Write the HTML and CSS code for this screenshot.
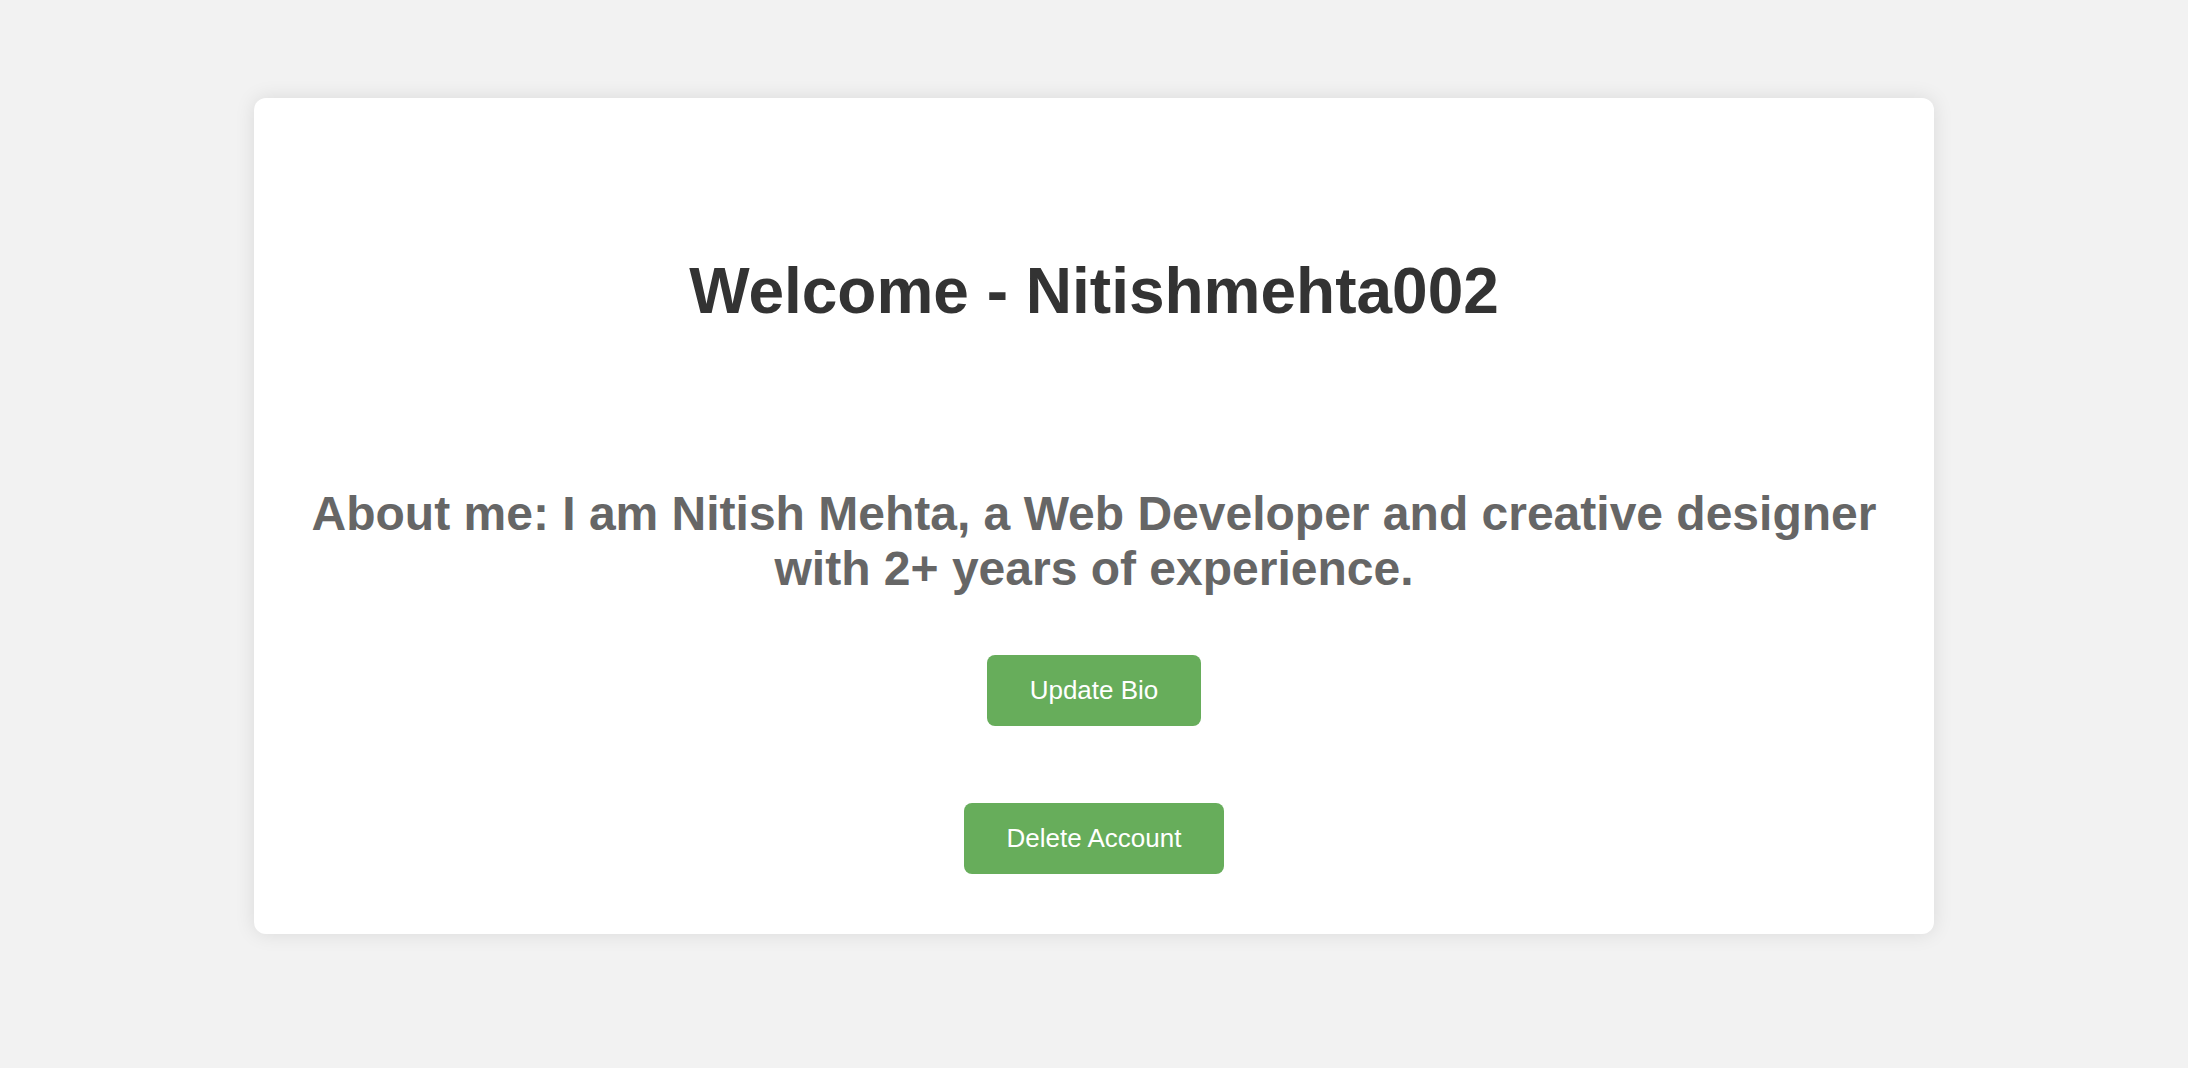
FILE: index.html
```html
<!DOCTYPE html>
<html lang="en">
<head>
<meta charset="utf-8">
<title>Profile</title>
<link rel="stylesheet" href="styles.css">
</head>
<body>
<main class="card">
  <h1 class="title">Welcome - Nitishmehta002</h1>
  <h2 class="about">About me: I am Nitish Mehta, a Web Developer and creative designer with 2+ years of experience.</h2>
  <div class="actions">
    <button class="btn btn-update">Update Bio</button>
    <button class="btn btn-delete">Delete Account</button>
  </div>
</main>
</body>
</html>
```
FILE: styles.css
```css
html, body {
  margin: 0;
  padding: 0;
}
body {
  background: #f2f2f2;
  font-family: "Liberation Sans", Arial, Helvetica, sans-serif;
  padding-top: 98px;
  min-height: 1068px;
  box-sizing: border-box;
}
.card {
  width: 1680px;
  box-sizing: border-box;
  margin: 0 auto;
  background: #ffffff;
  border-radius: 12px;
  box-shadow: 0 0 20px rgba(0, 0, 0, 0.1);
  padding: 156px 40px 60px;
  text-align: center;
}
.title {
  margin: 0;
  font-size: 64px;
  font-weight: 700;
  color: #333333;
  line-height: normal;
}
.about {
  margin: 158px 0 0;
  font-size: 48px;
  font-weight: 700;
  color: #666666;
  line-height: normal;
}
.actions {
  display: flex;
  flex-direction: column;
  align-items: center;
  gap: 77px;
  margin-top: 59px;
}
.btn {
  font-family: "Liberation Sans", Arial, Helvetica, sans-serif;
  font-size: 26px;
  line-height: 30px;
  color: #ffffff;
  background: #67ad5b;
  border: none;
  border-radius: 8px;
  padding: 20px 43px 21px;
  cursor: pointer;
}
```
